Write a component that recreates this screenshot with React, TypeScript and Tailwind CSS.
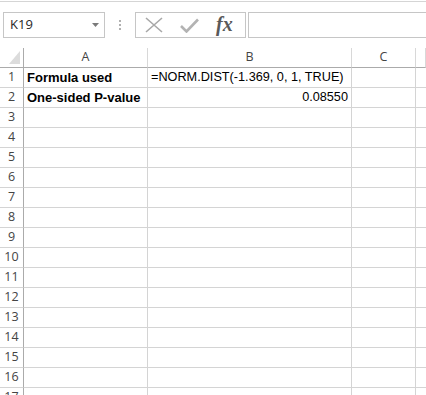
import React from 'react';

const cols = ['A', 'B', 'C', ''];

const cells: Record<number, { a?: string; b?: string }> = {
  1: { a: 'Formula used', b: '=NORM.DIST(-1.369, 0, 1, TRUE)' },
  2: { a: 'One-sided P-value', b: '0.08550' },
};

const rows = Array.from({ length: 17 }, (_, i) => i + 1);

const NameBox: React.FC = () => (
  <div className="ml-[3px] w-[102px] h-[26px] border border-[#c6c6c6] flex items-center justify-between pl-[6px] pr-[5px]">
    <span className="text-[13px] text-[#262626]">K19</span>
    <svg width="7" height="4" viewBox="0 0 7 4">
      <path d="M0 0 L7 0 L3.5 4 Z" fill="#7a7a7a" />
    </svg>
  </div>
);

const FormulaButtons: React.FC = () => (
  <div className="ml-[14px] w-[111px] h-[26px] border border-[#c6c6c6] flex items-center">
    <svg width="18" height="16" viewBox="0 0 18 16" className="ml-[9px]">
      <path d="M1 1 L17 15 M17 1 L1 15" stroke="#a8a8a8" strokeWidth="1.6" fill="none" />
    </svg>
    <svg width="19" height="15" viewBox="0 0 19 15" className="ml-[17px]">
      <path d="M1 8 L6.5 13.5 L18 1.5" stroke="#b3b3b3" strokeWidth="2.6" fill="none" />
    </svg>
    <span className="ml-[17px] font-['Liberation_Serif',serif] italic font-bold text-[20px] leading-none text-[#595959] -mt-[2px]">
      fx
    </span>
  </div>
);

const App: React.FC = () => {
  return (
    <div className="w-[426px] h-[395px] overflow-hidden bg-white font-['Open_Sans',sans-serif]">
      <div className="h-px mt-px bg-[#d5d5d5]" />

      <div className="flex items-center mt-[10px] h-[26px]">
        <NameBox />
        <div className="ml-[14px] flex flex-col gap-[2px]">
          <span className="w-[2px] h-[2px] bg-[#b0b0b0]" />
          <span className="w-[2px] h-[2px] bg-[#b0b0b0]" />
          <span className="w-[2px] h-[2px] bg-[#b0b0b0]" />
        </div>
        <FormulaButtons />
        <div className="ml-[2px] flex-1 h-[26px] border border-r-0 border-[#c6c6c6]" />
      </div>

      <div className="mt-[10px] grid grid-cols-[24px_124px_204px_64px_1fr]">
        <div className="h-[20px] border-r border-b border-[#ababab] flex items-end justify-end pr-[3px] pb-[3px]">
          <svg width="11" height="13" viewBox="0 0 11 13">
            <path d="M11 0 L11 13 L0 13 Z" fill="#dcdcdc" />
          </svg>
        </div>
        {cols.map((c, i) => (
          <div
            key={i}
            className="h-[20px] border-b border-b-[#ababab] border-r border-r-[#d8d8d8] flex items-center justify-center text-[12.5px] text-[#444]"
          >
            {c}
          </div>
        ))}

        {rows.map((r) => (
          <React.Fragment key={r}>
            <div className="h-[20px] border-r border-r-[#ababab] border-b border-b-[#d4d4d4] flex items-center justify-center text-[12.5px] text-[#444]">
              {r}
            </div>
            <div className="h-[20px] border-r border-b border-[#d4d4d4] flex items-center pl-[3px] font-['Liberation_Sans',sans-serif] font-bold text-[13px] text-black whitespace-nowrap">
              {cells[r]?.a}
            </div>
            <div
              className={`h-[20px] border-r border-b border-[#d4d4d4] flex items-center px-[3px] font-['Liberation_Sans',sans-serif] text-[12.7px] text-black whitespace-nowrap ${
                r === 2 ? 'justify-end' : ''
              }`}
            >
              {cells[r]?.b}
            </div>
            <div className="h-[20px] border-r border-b border-[#d4d4d4]" />
            <div className="h-[20px] border-b border-[#d4d4d4]" />
          </React.Fragment>
        ))}
      </div>
    </div>
  );
};

export default App;
